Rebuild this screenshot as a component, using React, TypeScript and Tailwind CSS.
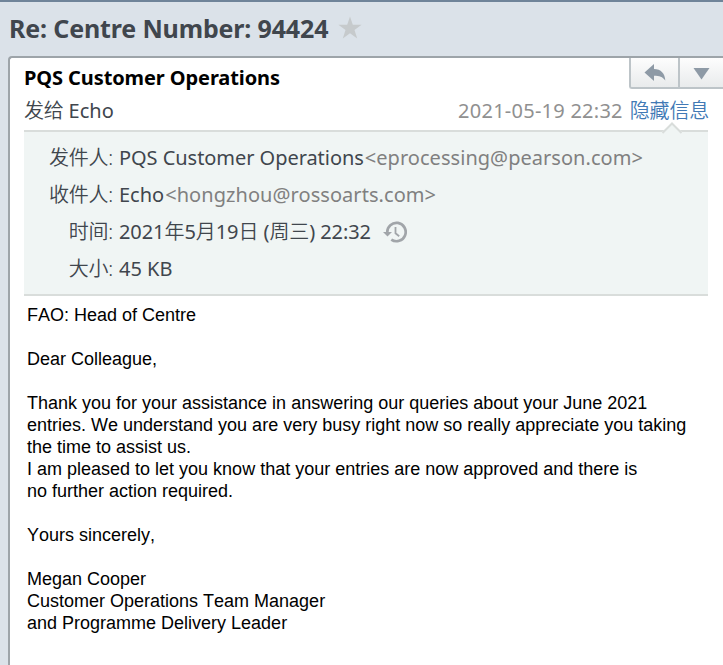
import * as React from "react";

type DetailRowProps = {
  label: string;
  children: React.ReactNode;
};

function StarIcon() {
  return (
    <svg width="24" height="24" viewBox="0 0 24 24" className="-mt-[2px] shrink-0">
      <path
        d="M12 0.5l2.8 8.3h8.8l-7.1 5.2 2.7 8.5-7.2-5.2-7.2 5.2 2.7-8.5L0.4 8.800h8.800z"
        fill="#c6cacc"
      />
    </svg>
  );
}

function ReplyIcon() {
  return (
    <svg width="22" height="18" viewBox="0 0 22 18">
      <path
        d="M0.500 8.500L10 0v5c7 0 11 4.500 11.300 11.500-2.800-3.700-5.800-4.700-11.300-4.700V17z"
        fill="#8e9aa6"
      />
    </svg>
  );
}

function HistoryIcon() {
  return (
    <svg width="24" height="22" viewBox="0 0 24 22" fill="none">
      <path
        d="M4.300 11.500A9.200 9.200 0 1 1 8.300 18.600"
        stroke="#a1a5a9"
        strokeWidth="2.7"
      />
      <path d="M0 11h9l-4.500 4.500z" fill="#a1a5a9" />
      <path d="M12.500 6v6.200l3.700 3" stroke="#a1a5a9" strokeWidth="1.800" />
    </svg>
  );
}

function DetailRow({ label, children }: DetailRowProps) {
  return (
    <div className="flex h-[37px] items-center whitespace-nowrap">
      <span className="w-[89px] text-right font-[350] tracking-[-0.2px]">
        {label}:
      </span>
      <div className="ml-[6px] flex items-center">{children}</div>
    </div>
  );
}

function CardActions() {
  return (
    <div className="flex h-[31px] w-[94px] rounded-bl-[3px] border-b-2 border-l-2 border-[#bdc4c8] bg-linear-to-b from-[#fdfdfd] to-[#e9ebec]">
      <button className="flex w-[47px] items-center justify-center">
        <ReplyIcon />
      </button>
      <button className="flex flex-1 items-center justify-center border-l-2 border-[#bdc4c8] pt-[2px]">
        <svg width="17" height="12" viewBox="0 0 17 12">
          <path d="M0.500 0h16l-8 11.500z" fill="#8e9aa6" />
        </svg>
      </button>
    </div>
  );
}

export default function App() {
  return (
    <div className="flex h-[665px] w-[723px] flex-col overflow-hidden border-t-2 border-[#6f8499] bg-[#dbe2e9] font-['Noto_Sans','Noto_Sans_CJK_SC',sans-serif] text-[20px] text-[#40464d]">
      <header className="flex h-[54px] items-center pl-[9px]">
        <h1 className="w-[329px] text-[25px] font-bold tracking-[-0.15px] whitespace-nowrap">
          Re: Centre Number: 94424
        </h1>
        <StarIcon />
      </header>

      <main className="ml-[8px] flex flex-1 flex-col rounded-tl-[4px] border-t-2 border-l-2 border-[#9da4a9] bg-white">
        <div className="flex h-[35px] justify-between pl-[14px]">
          <h2 className="pt-[6px] leading-[28px] font-bold tracking-[-0.1px] text-black">
            PQS Customer Operations
          </h2>
          <CardActions />
        </div>
        <div className="mr-[14px] ml-[14px] flex h-[37px] justify-between leading-[36px]">
          <div>
            <span className="font-[350] tracking-[-0.3px]">发给</span> Echo
          </div>
          <div className="flex gap-[7px] whitespace-nowrap text-[#909090]">
            <span className="tracking-[0.25px]">2021-05-19 22:32</span>
            <a className="font-[350] tracking-[-0.2px] text-[#4179b5]">隐藏信息</a>
          </div>
        </div>

        {/* Sender details */}
        <section className="relative mr-[15px] ml-[14px] h-[166px] border-y-2 border-[#d9dddb] bg-[#f0f5f4] pt-[7px]">
          <svg
            width="20"
            height="12"
            viewBox="0 0 20 12"
            className="absolute top-[-10px] right-[26px]"
          >
            <path d="M0 10l10-9 10 9v2H0z" fill="#f0f5f4" />
            <path d="M0.500 11L10 1.500l9.500 9.500" fill="none" stroke="#d9dddb" strokeWidth="2" />
          </svg>
          <DetailRow label="发件人">
            <span className="tracking-[-0.05px]">PQS Customer Operations</span>
            <span className="ml-[1px] tracking-[0.04px] text-[#808080]">
              &lt;eprocessing@pearson.com&gt;
            </span>
          </DetailRow>
          <DetailRow label="收件人">
            <span>Echo</span>
            <span className="ml-[1px] tracking-[0.06px] text-[#808080]">
              &lt;hongzhou@rossoarts.com&gt;
            </span>
          </DetailRow>
          <DetailRow label="时间">
            <span className="mr-[12px] tracking-[-0.08px]">
              2021<span className="font-[350]">年</span>5
              <span className="font-[350]">月</span>19
              <span className="font-[350]">日</span> (
              <span className="font-[350]">周三</span>) 22:32
            </span>
            <HistoryIcon />
          </DetailRow>
          <DetailRow label="大小">
            <span>45 KB</span>
          </DetailRow>
        </section>

        <article className="pt-[8px] pl-[17px] font-['Liberation_Sans',sans-serif] text-[18px] leading-[22px] whitespace-nowrap text-black [font-kerning:none]">
          <p>FAO: Head of Centre</p>
          <p className="mt-[22px]">Dear Colleague,</p>
          <p className="mt-[22px]">
            Thank you for your assistance in answering our queries about your June 2021
            <br />
            entries. We understand you are very busy right now so really appreciate you taking
            <br />
            the time to assist us.
          </p>
          <p>
            I am pleased to let you know that your entries are now approved and there is
            <br />
            no further action required.
          </p>
          <p className="mt-[22px]">Yours sincerely,</p>
          <p className="mt-[22px]">
            Megan Cooper
            <br />
            Customer Operations Team Manager
            <br />
            and Programme Delivery Leader
          </p>
        </article>
      </main>
    </div>
  );
}
